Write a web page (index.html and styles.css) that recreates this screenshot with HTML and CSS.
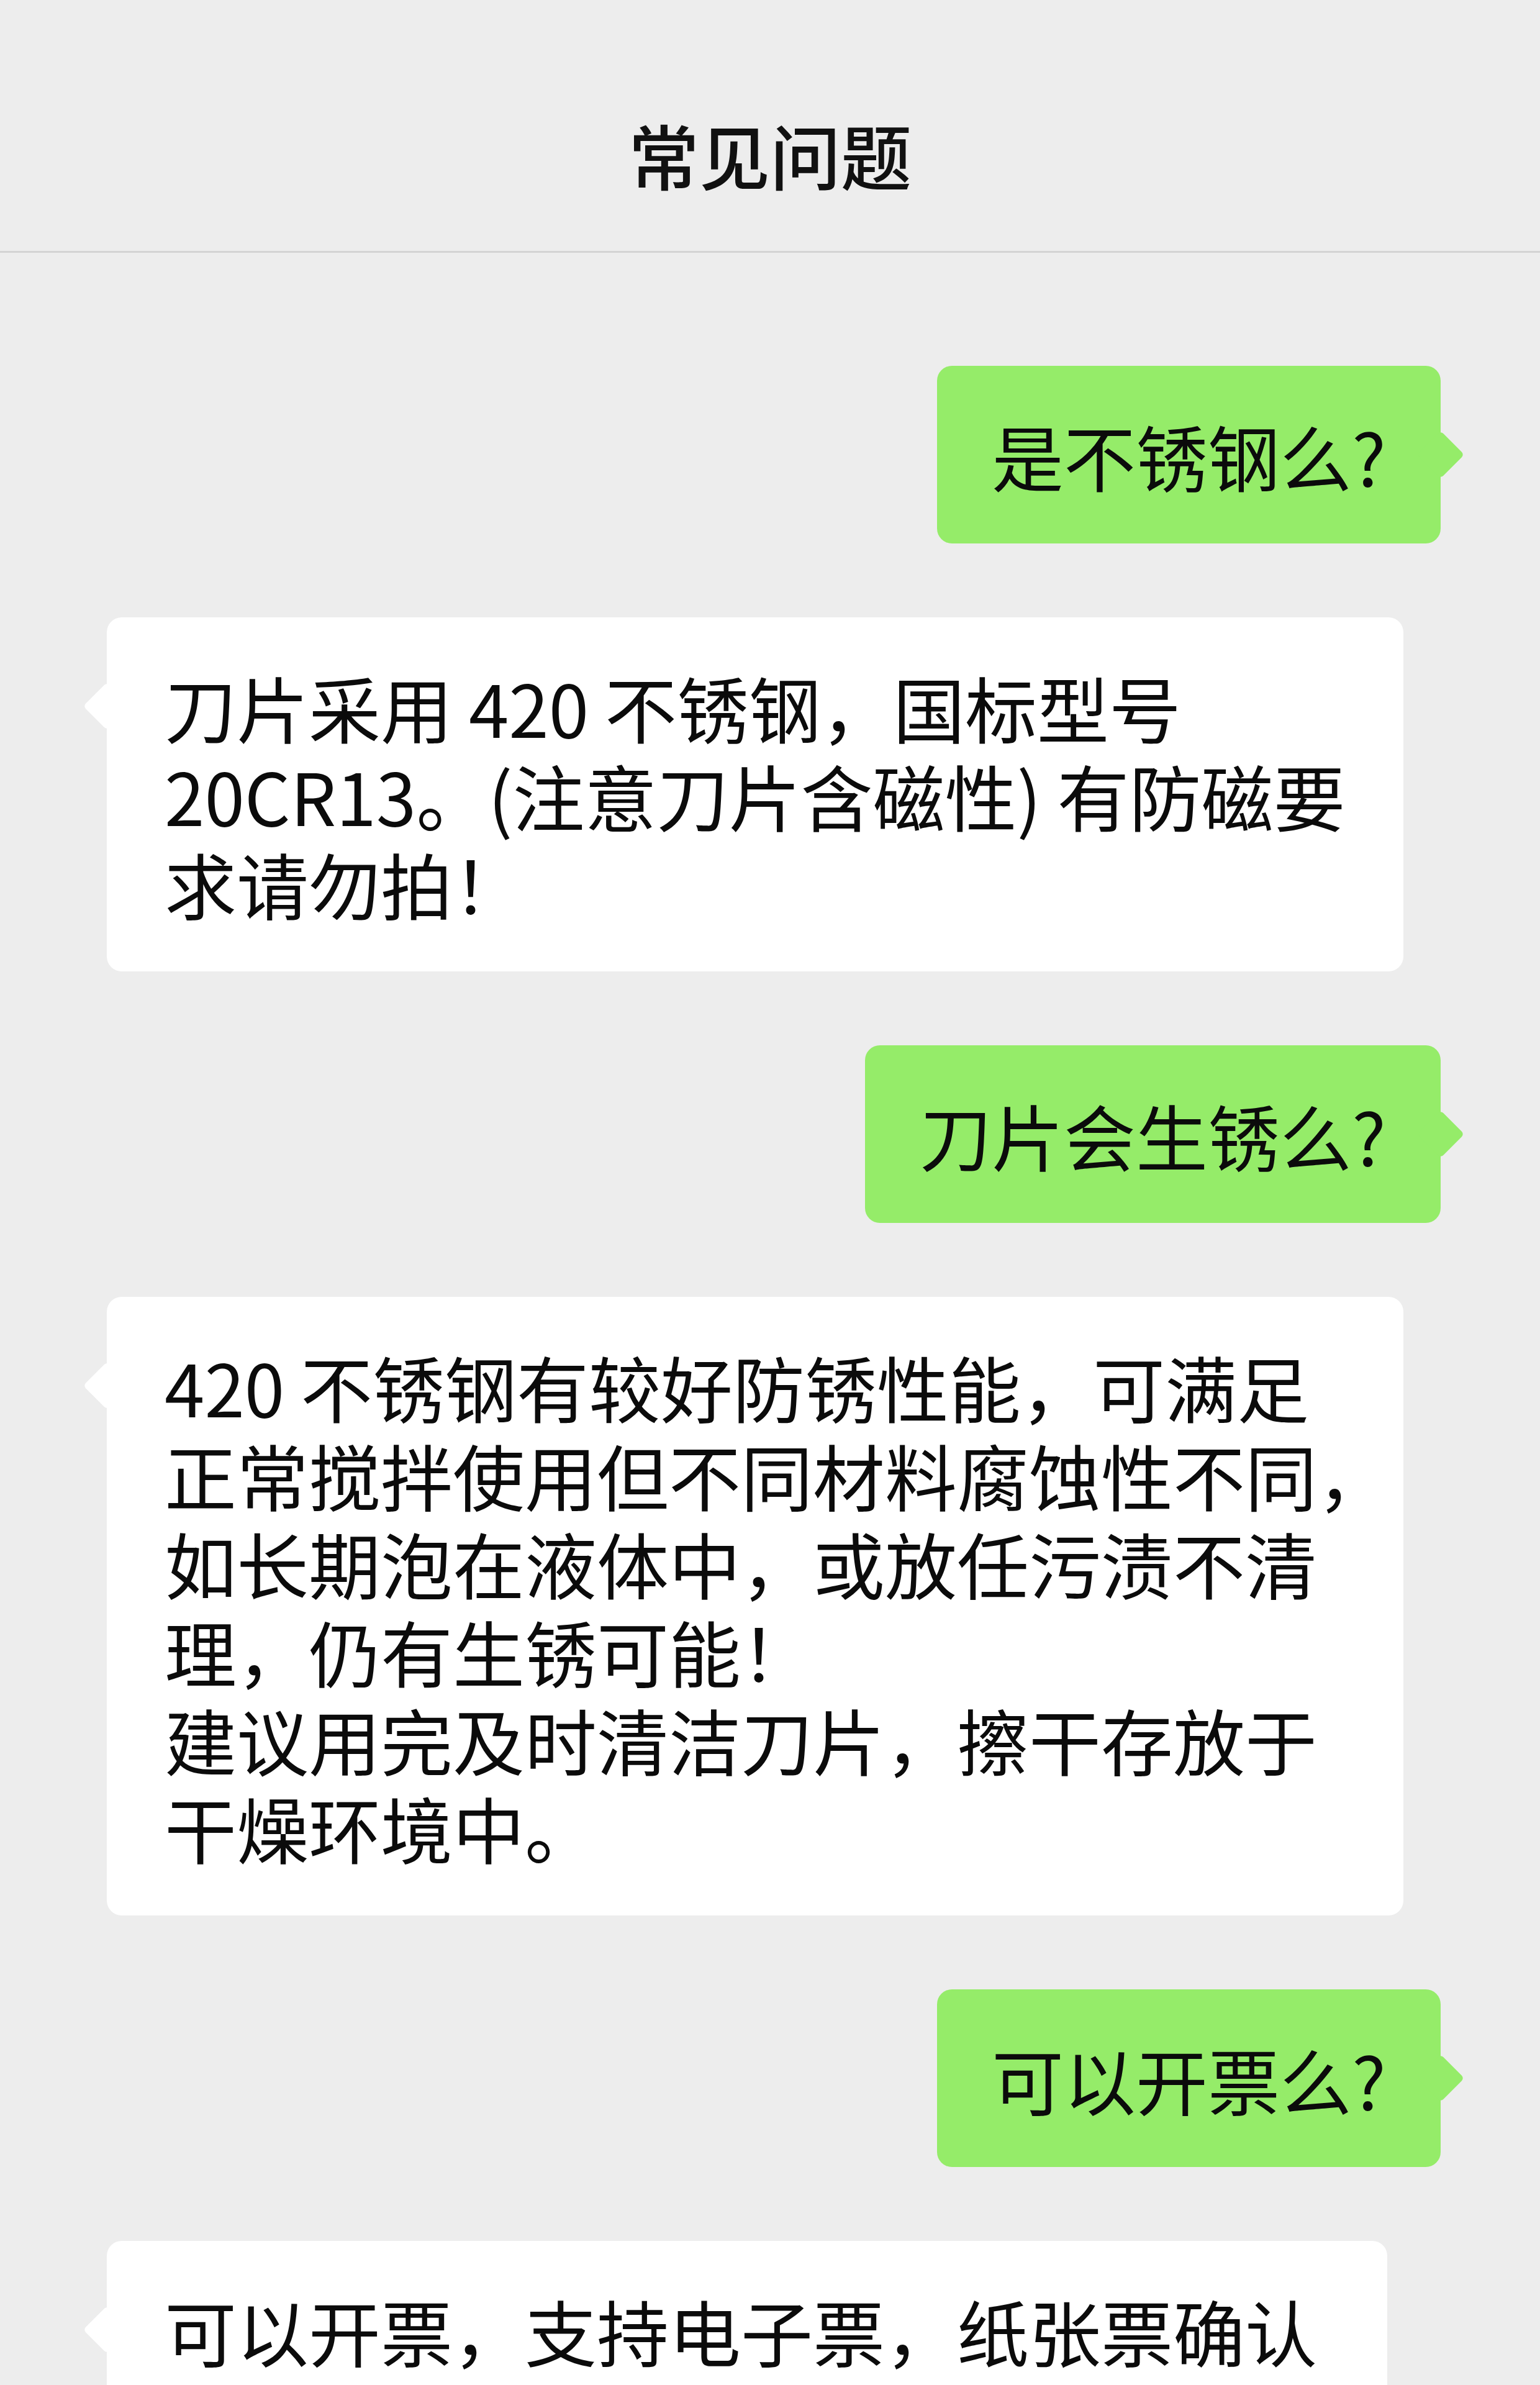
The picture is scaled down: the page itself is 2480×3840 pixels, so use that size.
FILE: index.html
```html
<!DOCTYPE html>
<html lang="zh-CN">
<head>
<meta charset="utf-8">
<title>常见问题</title>
<link rel="stylesheet" href="styles.css">
</head>
<body>
<div class="screen">
  <header class="nav">
    <h1 class="nav-title">常见问题</h1>
  </header>
  <main class="chat">
    <div class="row row-out">
      <div class="bubble bubble-out">是不锈钢么?</div>
    </div>
    <div class="row row-in">
      <div class="bubble bubble-in">刀片采用 420 不锈钢，国标型号<br>20CR13。(注意刀片含磁性) 有防磁要<br>求请勿拍！</div>
    </div>
    <div class="row row-out">
      <div class="bubble bubble-out">刀片会生锈么?</div>
    </div>
    <div class="row row-in">
      <div class="bubble bubble-in">420 不锈钢有较好防锈性能，可满足<br>正常搅拌使用但不同材料腐蚀性不同，<br>如长期泡在液体中，或放任污渍不清<br>理，仍有生锈可能！<br>建议用完及时清洁刀片，擦干存放于<br>干燥环境中。</div>
    </div>
    <div class="row row-out">
      <div class="bubble bubble-out">可以开票么?</div>
    </div>
    <div class="row row-in">
      <div class="bubble bubble-in bubble-narrow">可以开票，支持电子票，纸张票确认<br>收货后七天内开具寄出，需要发票<br>请联系客服。</div>
    </div>
  </main>
</div>
</body>
</html>
```

FILE: styles.css
```css
html,
body {
  margin: 0;
  padding: 0;
  height: 3840px;
  overflow: hidden;
  background: #ededed;
}

body {
  font-family: "Noto Sans CJK SC", "Noto Sans", sans-serif;
  color: #0b0b0b;
}

.screen {
  width: 2480px;
  height: 3840px;
  overflow: hidden;
}

.nav {
  box-sizing: border-box;
  height: 407px;
  padding-top: 92px;
  display: flex;
  align-items: center;
  justify-content: center;
  background: #ededed;
  border-bottom: 3px solid #d4d4d4;
}

.nav-title {
  margin: 0;
  font-size: 114px;
  line-height: 1;
  font-weight: 500;
  color: #111;
}

.chat {
  display: flex;
  flex-direction: column;
  gap: 119px;
  padding: 182px 160px 0 172px;
}

.row {
  display: flex;
}

.row-out {
  justify-content: flex-end;
}

.row-in {
  justify-content: flex-start;
}

.bubble {
  position: relative;
  box-sizing: border-box;
  font-size: 116px;
  line-height: 142px;
  white-space: nowrap;
  border-radius: 24px;
}

.bubble::after {
  content: "";
  position: absolute;
  top: 116px;
  width: 54px;
  height: 54px;
  background: inherit;
  border-radius: 6px;
  transform: rotate(45deg);
}

.bubble-out {
  background: #95ec69;
  padding: 72px 88px;
}

.bubble-out::after {
  right: -27px;
}

.bubble-in {
  background: #ffffff;
  width: 2088px;
  padding: 72px 93px;
}

.bubble-in::after {
  left: -27px;
}

.bubble-narrow {
  width: 2062px;
}
```
